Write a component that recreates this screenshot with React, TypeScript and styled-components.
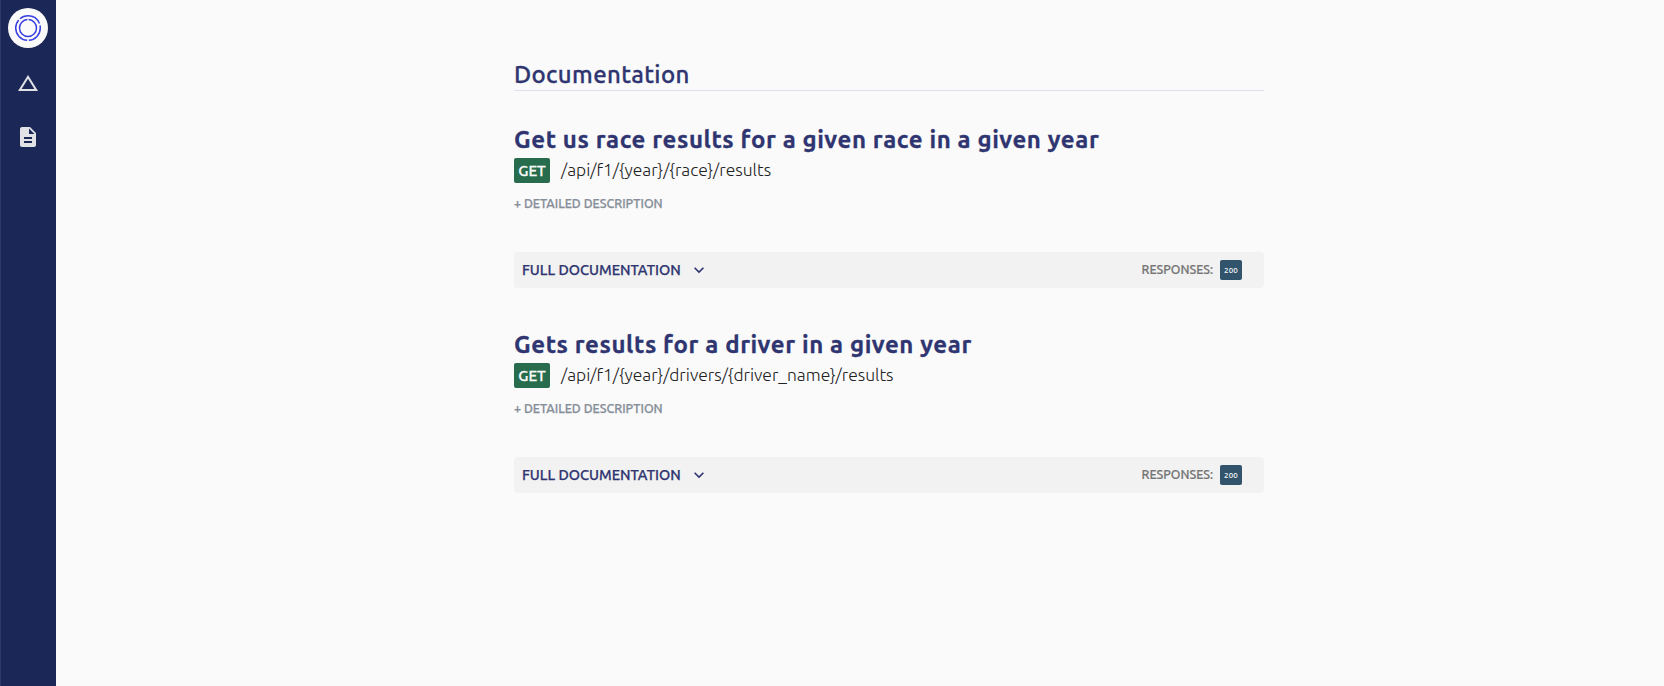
import React from 'react';
import styled, { createGlobalStyle } from 'styled-components';

const GlobalStyle = createGlobalStyle`
  *, *::before, *::after { box-sizing: border-box; }
  body {
    margin: 0;
    background: #fafafa;
    font-family: Ubuntu, "Noto Sans", sans-serif;
    -webkit-font-smoothing: antialiased;
  }
`;

const Layout = styled.div`
  display: flex;
  min-height: 100vh;
`;

const Sidebar = styled.nav`
  display: flex;
  flex-direction: column;
  align-items: center;
  flex: 0 0 56px;
  padding-top: 8px;
  background: #1b2757;
  box-shadow: inset 1px 0 0 #2c3866;
`;

const Logo = styled.div`
  display: grid;
  place-items: center;
  width: 40px;
  height: 40px;
  margin-bottom: 23px;
  border-radius: 50%;
  background: #fafafa;
`;

const NavIcon = styled.a`
  display: flex;
  width: 24px;
  height: 24px;
  margin-bottom: 30px;
  color: #e1e2e6;
`;

const Main = styled.main`
  display: flex;
  flex: 1;
  justify-content: center;
  padding: 58px 0 0 0;
`;

const Content = styled.div`
  width: 750px;
  margin-right: 38px;
  margin-left: 96px;
`;

const PageTitle = styled.h1`
  height: 33px;
  margin: 0;
  border-bottom: 1px solid #dfe2ee;
  color: #2f3570;
  font-size: 24px;
  font-weight: 500;
  line-height: 33px;
  letter-spacing: 0.35px;
  -webkit-text-stroke: 0.3px currentColor;
`;

const Endpoint = styled.section`
  height: 205px;
  padding-top: 34px;
`;

const EndpointTitle = styled.h2`
  margin: 0;
  color: #2f3570;
  font-size: 24px;
  font-weight: 700;
  line-height: 30px;
  letter-spacing: 0.6px;
  -webkit-text-stroke: 0.3px currentColor;
`;

const Route = styled.div`
  display: flex;
  align-items: center;
  gap: 11px;
  height: 25px;
  margin-top: 3px;
`;

const Method = styled.span`
  display: grid;
  place-items: center;
  width: 36px;
  height: 25px;
  border-radius: 2px;
  background: #276d4d;
  color: #fafafa;
  font-size: 15px;
  font-weight: 500;
  -webkit-text-stroke: 0.3px currentColor;
`;

const Path = styled.span`
  padding-bottom: 2px;
  color: #212121;
  font-size: 17.45px;
  font-weight: 300;
  line-height: 23px;
`;

const DetailToggle = styled.div`
  margin-top: 11px;
  color: #868e99;
  font-size: 12.45px;
  font-weight: 500;
  line-height: 18px;
  -webkit-text-stroke: 0.25px currentColor;
`;

const DocumentationBar = styled.div`
  display: flex;
  align-items: center;
  height: 36px;
  margin-top: 40px;
  padding: 0 22px 0 8px;
  border-radius: 4px;
  background: #f2f2f2;
`;

const BarLabel = styled.span`
  margin-right: 8px;
  color: #2f3570;
  font-size: 14.45px;
  font-weight: 500;
  line-height: 18px;
  -webkit-text-stroke: 0.25px currentColor;
`;

const Responses = styled.div`
  display: flex;
  align-items: center;
  gap: 7px;
  margin-left: auto;
`;

const ResponsesLabel = styled.span`
  padding-bottom: 2px;
  color: #757575;
  font-size: 12.35px;
  font-weight: 500;
  line-height: 18px;
  -webkit-text-stroke: 0.2px currentColor;
`;

const StatusCode = styled.span`
  display: grid;
  place-items: center;
  width: 22px;
  height: 20px;
  border-radius: 2px;
  background: #31536c;
  color: #fafafa;
  font-size: 8px;
  font-weight: 500;
  letter-spacing: 0.2px;
`;

interface EndpointDoc {
  title: string;
  method: string;
  path: string;
  responses: number[];
}

const endpoints: EndpointDoc[] = [
  {
    title: 'Get us race results for a given race in a given year',
    method: 'GET',
    path: '/api/f1/{year}/{race}/results',
    responses: [200],
  },
  {
    title: 'Gets results for a driver in a given year',
    method: 'GET',
    path: '/api/f1/{year}/drivers/{driver_name}/results',
    responses: [200],
  },
];

const LogoMark = () => (
  <svg width="28" height="28" viewBox="0 0 28 28" fill="none" stroke="#3a3fe0" strokeWidth="1.5">
    <circle cx="14" cy="14" r="12.3" pathLength="360" strokeDasharray="86 8 127 8 110 8 13 0" />
    <circle cx="14" cy="14" r="8.5" pathLength="360" strokeDasharray="266 8 86 0" />
  </svg>
);

const TriangleIcon = () => (
  <svg width="24" height="24" viewBox="0 0 24 24" fill="currentColor">
    <path d="M12 7.77L18.39 18H5.61L12 7.77M12 4L2 20h20L12 4z" />
  </svg>
);

const DocumentIcon = () => (
  <svg width="24" height="24" viewBox="0 0 24 24" fill="currentColor">
    <path d="M14 2H6c-1.1 0-1.99.9-1.99 2L4 20c0 1.1.89 2 1.99 2H18c1.1 0 2-.9 2-2V8l-6-6zm2 16H8v-2h8v2zm0-4H8v-2h8v2zm-3-5V3.5L18.5 9H13z" />
  </svg>
);

const ChevronIcon = () => (
  <svg width="20" height="20" viewBox="0 0 24 24" fill="#2f3570">
    <path d="M7.41 8.59L12 13.17l4.59-4.58L18 10l-6 6-6-6 1.41-1.41z" />
  </svg>
);

function EndpointBlock({ endpoint }: { endpoint: EndpointDoc }) {
  return (
    <Endpoint>
      <EndpointTitle>{endpoint.title}</EndpointTitle>
      <Route>
        <Method>{endpoint.method}</Method>
        <Path>{endpoint.path}</Path>
      </Route>
      <DetailToggle>+ DETAILED DESCRIPTION</DetailToggle>
      <DocumentationBar>
        <BarLabel>FULL DOCUMENTATION</BarLabel>
        <ChevronIcon />
        <Responses>
          <ResponsesLabel>RESPONSES:</ResponsesLabel>
          {endpoint.responses.map((code) => (
            <StatusCode key={code}>{code}</StatusCode>
          ))}
        </Responses>
      </DocumentationBar>
    </Endpoint>
  );
}

export default function App() {
  return (
    <Layout>
      <GlobalStyle />
      <Sidebar>
        <Logo>
          <LogoMark />
        </Logo>
        <NavIcon>
          <TriangleIcon />
        </NavIcon>
        <NavIcon>
          <DocumentIcon />
        </NavIcon>
      </Sidebar>
      <Main>
        <Content>
          <PageTitle>Documentation</PageTitle>
          {endpoints.map((endpoint) => (
            <EndpointBlock key={endpoint.path} endpoint={endpoint} />
          ))}
        </Content>
      </Main>
    </Layout>
  );
}
